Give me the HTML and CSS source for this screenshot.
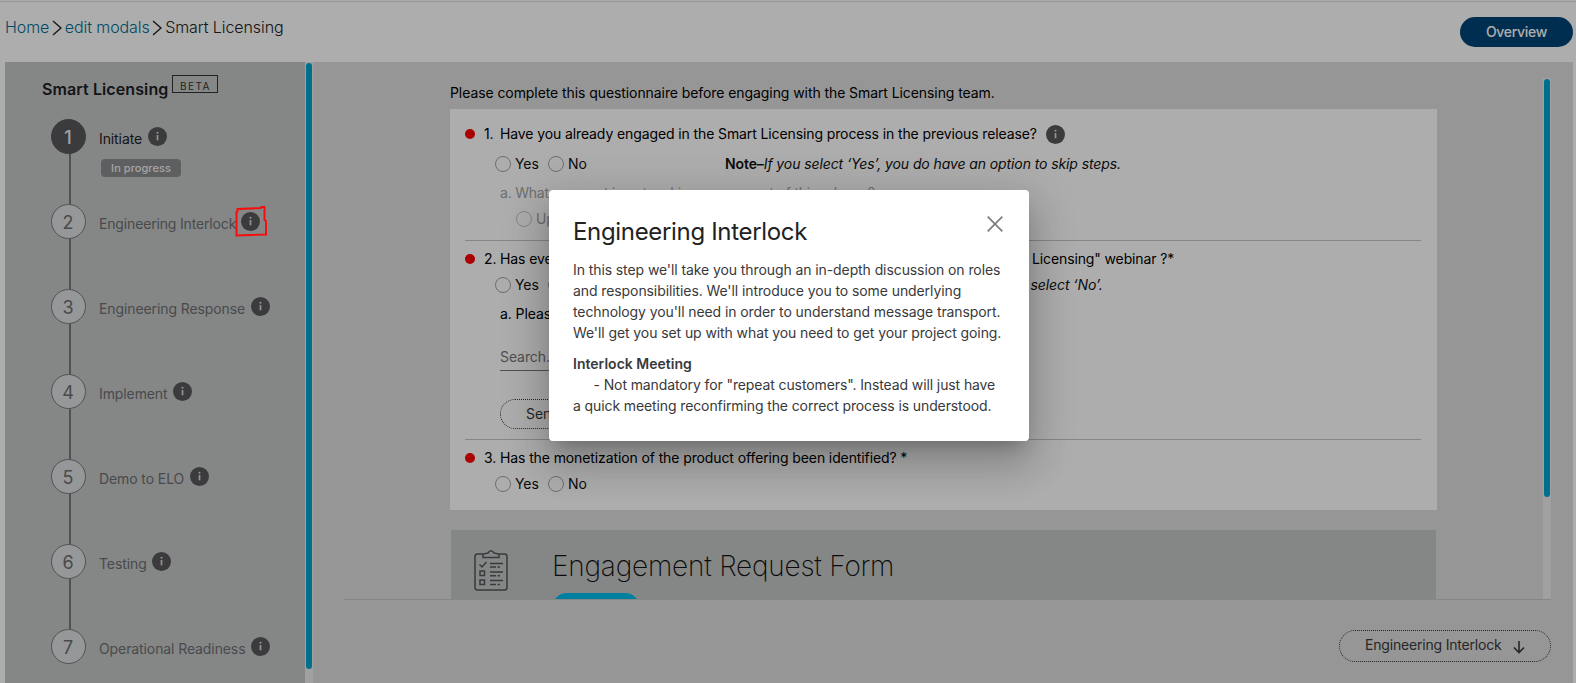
FILE: index.html
```html
<!DOCTYPE html>
<html lang="en">
<head>
<meta charset="utf-8">
<title>Smart Licensing</title>
<link rel="stylesheet" href="styles.css">
</head>
<body>
<svg width="0" height="0" class="defs">
  <symbol id="info" viewBox="0 0 20 20"><circle cx="10" cy="10" r="10" fill="#58585b"/><path d="M10 8.400V14" stroke="#d8d8d8" stroke-width="1.8"/><circle cx="10" cy="6" r="1.100" fill="#d8d8d8"/></symbol>
  <symbol id="chev" viewBox="0 0 10 16"><path d="M1 1 9 8 1 15" fill="none" stroke="#222" stroke-width="1.4"/></symbol>
</svg>
<div class="page">
  <header class="top">
    <nav class="crumbs">
      <a>Home</a><svg class="chev"><use href="#chev"/></svg><a>edit modals</a><svg class="chev"><use href="#chev"/></svg><span>Smart Licensing</span>
    </nav>
    <button class="overview"><span>Overview</span></button>
  </header>
  <div class="shell">
    <aside class="side">
      <div class="side-title"><h1>Smart Licensing</h1><span class="beta">BETA</span></div>
      <ol class="steps">
        <li class="step active"><b class="num">1</b><div class="body"><div class="lab"><span>Initiate</span><svg class="info"><use href="#info"/></svg></div><span class="status">In progress</span></div></li>
        <li class="step"><b class="num">2</b><div class="body"><div class="lab"><span>Engineering Interlock</span><svg class="info"><use href="#info"/></svg></div></div></li>
        <li class="step"><b class="num">3</b><div class="body"><div class="lab"><span>Engineering Response</span><svg class="info"><use href="#info"/></svg></div></div></li>
        <li class="step"><b class="num">4</b><div class="body"><div class="lab"><span>Implement</span><svg class="info"><use href="#info"/></svg></div></div></li>
        <li class="step"><b class="num">5</b><div class="body"><div class="lab"><span>Demo to ELO</span><svg class="info"><use href="#info"/></svg></div></div></li>
        <li class="step"><b class="num">6</b><div class="body"><div class="lab"><span>Testing</span><svg class="info"><use href="#info"/></svg></div></div></li>
        <li class="step"><b class="num">7</b><div class="body"><div class="lab"><span>Operational Readiness</span><svg class="info"><use href="#info"/></svg></div></div></li>
      </ol>
    </aside>
    <div class="track side-track"><div class="thumb"></div></div>
    <main class="main">
      <div class="scroll">
        <div class="content">
          <p class="lead">Please complete this questionnaire before engaging with the Smart Licensing team.</p>
          <section class="panel">
            <div class="q q1">
              <div class="row"><i class="dot"></i><span class="n">1.</span><span class="t">Have you already engaged in the Smart Licensing process in the previous release?</span><svg class="info"><use href="#info"/></svg></div>
              <div class="row radios"><i class="radio"></i><span class="opt">Yes</span><i class="radio"></i><span class="opt">No</span><span class="note"><b>Note–</b><em>If you select ‘Yes’, you do have an option to skip steps.</em></span></div>
              <div class="row sub faded"><span>a. What segment is not making component of this release?</span></div>
              <div class="row upd faded"><i class="radio"></i><span class="opt">Up</span></div>
            </div>
            <div class="q q2">
              <div class="row"><i class="dot"></i><span class="n">2.</span><span class="t head">Has eve</span><span class="tail">Licensing" webinar ?*</span></div>
              <div class="row radios"><i class="radio"></i><span class="opt">Yes</span><i class="radio"></i><span class="opt"></span><em class="tail-note">select ‘No’.</em></div>
              <div class="row sub"><span>a. Please</span></div>
              <div class="search">Search...</div>
              <div class="send">Send</div>
            </div>
            <div class="q q3">
              <div class="row"><i class="dot"></i><span class="n">3.</span><span class="t">Has the monetization of the product offering been identified? *</span></div>
              <div class="row radios"><i class="radio"></i><span class="opt">Yes</span><i class="radio"></i><span class="opt">No</span></div>
            </div>
          </section>
          <section class="form">
            <svg class="clip" viewBox="0 0 34 41" fill="none" stroke="#55565a" stroke-width="1.5"><path d="M9 4H3.500Q1 4 1 6.500V37.500Q1 40 3.500 40H30.500Q33 40 33 37.500V6.500Q33 4 30.500 4H25"/><path d="M9 7.500V5Q9 4 11.500 3.500L14 3Q17-1.500 20 3L22.500 3.500Q25 4 25 5V7.500Z"/><path d="M5.500 14.500 8 17 12.500 12"/><path d="M6 21h4.500v4.500H6zM6 30h4.500v4.500H6zM16 13.500h13M16 17h6M23.500 17h2.500M16 22h13M16 25.800h6M23.500 25.800h2.500M16 30.500h13M16 34.500h6M23.500 34.500h2.500"/></svg>
            <div><h2>Engagement Request Form</h2><div class="pill"></div></div>
          </section>
        </div>
        <div class="track main-track"><div class="thumb"></div></div>
      </div>
      <footer class="foot"><button class="next"><span>Engineering Interlock</span><svg viewBox="0 0 12 14" width="12" height="14" fill="none" stroke="#39393b" stroke-width="1.6"><path d="M6 1v11.500M1 7.500 6 12.500 11 7.500"/></svg></button></footer>
    </main>
  </div>
</div>
<div class="backdrop"></div>
<svg class="mark" viewBox="0 0 32 31"><path d="M2.500 6.500V3L26 2L26.500 1H29.500V14L31 15V28.500L16 29 1.500 29.500V5" fill="none" stroke="#fa0a0a" stroke-width="1.9"/></svg>
<div class="dialog" role="dialog">
  <div class="dialog-head"><h3>Engineering Interlock</h3><svg class="close" viewBox="0 0 16 16"><path d="M.7.7 15.300 15.300M15.300.7.7 15.300" stroke="#7c7c7c" stroke-width="1.700"/></svg></div>
  <p>In this step we'll take you through an in-depth discussion on roles<br>and responsibilities. We'll introduce you to some underlying<br>technology you'll need in order to understand message transport.<br>We'll get you set up with what you need to get your project going.</p>
  <h4>Interlock Meeting</h4>
  <p class="second">- Not mandatory for "repeat customers". Instead will just have<br>a quick meeting reconfirming the correct process is understood.</p>
</div>
</body>
</html>
```
FILE: styles.css
```css
* { box-sizing: border-box; margin: 0; padding: 0; }
html, body { width: 1576px; height: 683px; overflow: hidden; }
body { font-family: Inter, "Liberation Sans", sans-serif; font-size: 14px; font-weight: 380; letter-spacing: -0.08px; color: #000; background: #fff; position: relative; }
button { font: inherit; letter-spacing: inherit; border: 0; }
b { font-weight: 600; }
svg { flex: none; display: block; }
.defs { position: absolute; }
.page { height: 683px; border-top: 1px solid #fff; display: flex; flex-direction: column; }
.top { height: 61px; flex: none; border-top: 1px solid #dedede; padding: 15px 3px 0 5px; display: flex; justify-content: space-between; align-items: flex-start; }
.crumbs { display: flex; align-items: center; height: 19px; font-size: 16px; font-weight: 300; letter-spacing: -0.08px; color: #222; }
.crumbs a { color: #006e95; font-weight: 360; }
.chev { width: 10px; height: 16px; margin: 2px 3px 0 2.500px; }
.overview { width: 113px; height: 30px; padding-bottom: 1px; border-radius: 15px; background: #004576; color: #fff; font-weight: 500; letter-spacing: -0.3px; }
.shell { display: flex; flex: 1; min-height: 0; padding: 0 3px 0 5px; }
.side { width: 300px; background: #c5c7c8; padding: 13px 0 0 37px; }
.side-title { display: flex; height: 44px; gap: 4px; }
.side-title h1 { font-size: 16px; font-weight: 600; letter-spacing: 0.1px; line-height: 28px; color: #1c2026; }
.beta { width: 46px; height: 18px; border: 1px solid #333; font-size: 10px; letter-spacing: 1.5px; line-height: 20px; text-align: center; color: #333; }
.steps { list-style: none; padding-left: 9px; }
.step { display: flex; height: 85px; gap: 13px; background: linear-gradient(#77787b, #77787b) 18px 0 / 2px 100% no-repeat; color: #6c6d70; }
.step:last-child { background: none; }
.num { width: 35px; height: 35px; flex: none; border-radius: 50%; border: 1px solid #77787b; background: #dedfe0; font-size: 18px; font-weight: 400; line-height: 36px; text-align: center; color: #6c6d70; padding-right: 1px; }
.active .num { background: #58585b; border-color: #58585b; color: #eee; font-weight: 500; }
.active { color: #222; }
.lab { display: flex; gap: 5.500px; height: 35px; align-items: center; }
.lab span { padding-top: 4px; line-height: 20px; letter-spacing: -0.1px; }
.step:nth-child(2) .lab { gap: 5px; }
.step:nth-child(2) .lab span { letter-spacing: -0.16px; }
.info { width: 19px; height: 19px; }
.status { display: block; margin: 5px 0 0 2px; width: 80px; height: 18px; border-radius: 4px; background: #8b8c8e; color: #f0f0f0; font-size: 11px; font-weight: 500; letter-spacing: 0.05px; line-height: 18px; text-align: center; }
.track { width: 8px; background: #eee; padding: 1px; flex: none; }
.thumb { border-radius: 3px; background: #00a3cf; width: 6px; }
.side-track .thumb { height: 606px; }
.main { flex: 1; background: #dedede; display: flex; flex-direction: column; padding: 16px 22px 0 31px; }
.scroll { height: 522px; flex: none; border-bottom: 1px solid #c5c7c8; display: flex; justify-content: space-between; overflow: hidden; }
.main-track .thumb { height: 418px; }
.content { width: 987px; margin-left: 106px; }
.lead { height: 31px; line-height: 30px; }
.panel { background: #fff; height: 401px; padding: 15px 16px 0 15px; }
.q { border-bottom: 1px solid #c5c7c8; }
.q3 { border: 0; }
.row { display: flex; align-items: center; height: 20px; white-space: nowrap; }
.row span, .row em { position: relative; top: -1px; }
.row .note em { top: 0; }
.dot { width: 10px; height: 10px; border-radius: 50%; background: #fb0000; margin-right: 9px; flex: none; }
.n { width: 16px; flex: none; }
.q1 .t, .q3 .t { letter-spacing: -0.11px; }
.row .info { margin-left: 9px; }
.radio { width: 16px; height: 16px; border: 1px solid #9fa3aa; border-radius: 50%; flex: none; margin-right: 4px; }
.radios { padding-left: 30px; color: #111; }
.opt { width: 33px; flex: none; }
.q1 { height: 117px; }
.q1 .radios { margin-top: 10px; }
.note { margin-left: 124px; letter-spacing: -0.1px; }
.sub { padding-left: 35px; }
.q1 .sub { margin-top: 9px; letter-spacing: -0.22px; }
.faded { color: #a3a3a3; }
.upd { padding-left: 51px; margin-top: 6px; }
.faded .radio { border-color: #c4c4c4; }
.q2 { height: 199px; padding-top: 8px; }
.head { width: 532px; }
.tail { letter-spacing: -0.12px; }
.q2 .radios, .q3 .radios { margin-top: 6px; }
.tail-note { margin-left: 429.500px; }
.q2 .sub { margin-top: 9px; }
.search { width: 240px; margin: 24px 0 0 35px; height: 23px; line-height: 18px; border-bottom: 1px solid #77787b; color: #777; }
.send { width: 150px; height: 30px; margin: 28px 0 0 35px; border: 1px dotted #39393b; border-radius: 15px; padding-left: 25px; line-height: 28px; color: #39393b; }
.q3 { padding-top: 8px; }
.form { margin: 20px 1px 0; height: 110px; background: #c5c7c8; display: flex; padding: 20px 0 0 23px; gap: 44px; }
.clip { width: 34px; height: 41px; }
.form h2 { font-size: 28px; font-weight: 200; letter-spacing: -0.22px; line-height: 33px; color: #111; white-space: nowrap; }
.pill { width: 88px; height: 30px; border-radius: 15px; background: #00bceb; margin: 10px 0 0 0; }
.foot { display: flex; justify-content: flex-end; padding-top: 30px; }
.next { width: 212px; height: 32px; border: 1px dotted #39393b; border-radius: 16px; background: none; color: #39393b; display: flex; align-items: center; padding: 0 0 3px 25px; gap: 12px; white-space: nowrap; letter-spacing: -0.19px; }
.next svg { margin: 5px 0 0 -1px; }
.backdrop { position: absolute; inset: 0; background: rgba(0,0,0,.32); }
.mark { position: absolute; left: 235px; top: 206px; width: 32px; height: 31px; }
.dialog { position: absolute; left: 549px; top: 190px; width: 480px; height: 251px; background: #fff; border-radius: 4px; padding: 26px 24px 0; color: #39393b; line-height: 21px; letter-spacing: -0.09px; white-space: nowrap; box-shadow: 0 11px 15px -7px rgba(0,0,0,.2), 0 24px 38px 3px rgba(0,0,0,.14), 0 9px 46px 8px rgba(0,0,0,.12); }
.dialog-head { display: flex; justify-content: space-between; height: 43px; padding-right: 2px; }
.dialog h3 { font-size: 24px; font-weight: 370; letter-spacing: -0.33px; line-height: 32px; color: #222; }
.close { width: 16px; height: 16px; }
.dialog h4 { font-size: 14px; font-weight: 600; letter-spacing: 0.02px; margin-top: 10px; line-height: 21px; }
.second { text-indent: 20.500px; letter-spacing: -0.11px; }
```
